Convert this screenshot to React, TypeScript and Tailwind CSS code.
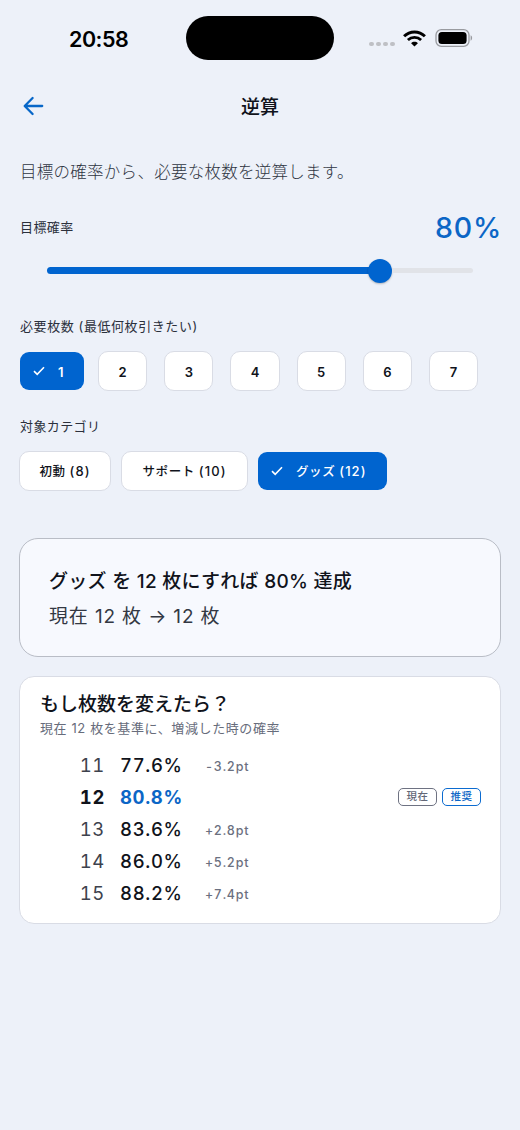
import React from "react";

const counts = [2, 3, 4, 5, 6, 7];

type Row = { count: number; rate: string; diff?: string; current?: boolean };

const rows: Row[] = [
  { count: 11, rate: "77.6%", diff: "-3.2pt" },
  { count: 12, rate: "80.8%", current: true },
  { count: 13, rate: "83.6%", diff: "+2.8pt" },
  { count: 14, rate: "86.0%", diff: "+5.2pt" },
  { count: 15, rate: "88.2%", diff: "+7.4pt" },
];

function StatusBar() {
  return (
    <div className="flex h-[76px] shrink-0 items-center">
      <div className="w-[186px] pl-[69px] pt-[3px] text-[21.5px] font-semibold leading-none tracking-[-0.5px] text-black">20:58</div>
      <div className="h-[44px] w-[148px] rounded-full bg-black" />
      <div className="ml-[35px] mt-[12px] flex gap-[2.2px]">
        {[0, 1, 2, 3].map((n) => (
          <span key={n} className="h-[4.5px] w-[4.8px] rounded-[2px] bg-[#bec0c5]" />
        ))}
      </div>
      <svg className="ml-[8px]" width="23" height="17" viewBox="0 0 23 17" fill="none">
        <path d="M1.1 6.2C6.9.5 16.1.5 21.9 6.2" stroke="#000" strokeWidth="3" />
        <path d="M4.9 9.9c3.7-3.5 9.5-3.5 13.2 0" stroke="#000" strokeWidth="2.8" />
        <path d="M8.1 13.2c1.9-1.8 4.9-1.8 6.8 0L11.5 16.6z" fill="#000" />
      </svg>
      <svg className="ml-[9px]" width="38" height="18" viewBox="0 0 38 18" fill="none">
        <rect x="1" y="0.7" width="33" height="16.6" rx="5.3" stroke="#999ba0" strokeWidth="1.3" />
        <rect x="3.4" y="3" width="28.2" height="12" rx="3.5" fill="#000" />
        <path d="M35.6 6.3c2 .7 2 4.7 0 5.4z" fill="#999ba0" />
      </svg>
    </div>
  );
}

function Check() {
  return (
    <svg className="shrink-0" width="12" height="10" viewBox="0 0 12 10" fill="none">
      <path d="M1 5.1l3.2 3.2L11 1.2" stroke="#fff" strokeWidth="1.6" />
    </svg>
  );
}

export default function App() {
  return (
    <div className="flex h-[1130px] w-[520px] flex-col overflow-hidden bg-[#edf1f9] font-['Inter','Noto_Sans_CJK_JP',sans-serif] text-[#10131b]">
      <StatusBar />
      <header className="grid h-[60px] shrink-0 grid-cols-[60px_1fr_60px] items-center">
        <svg className="ml-[23px]" width="21" height="20" viewBox="0 0 21 20" fill="none">
          <path d="M9.6 2L1.7 10l7.9 8M2 10h17.2" stroke="#0867c8" strokeWidth="2.3" strokeLinecap="round" strokeLinejoin="round" />
        </svg>
        <h1 className="pt-[3px] text-center text-[19px] font-medium leading-[28px]">逆算</h1>
      </header>

      <main className="flex flex-col px-[19px] pt-[24px]">
        <p className="pl-px text-[16.5px] font-light leading-[24px] tracking-[0.27px] text-[#2f3542]">
          目標の確率から、必要な枚数を逆算します。
        </p>

        <div className="mt-[24px] flex h-[40px] items-center justify-between">
          <span className="pl-px text-[13px] tracking-[0.4px] text-[#2b303c]">目標確率</span>
          <span className="mr-[-1px] text-[28.5px] font-medium tracking-[0.8px] text-[#0b66c6]">80%</span>
        </div>
        <div className="mx-[28px] mt-[10px] flex h-[25px] items-center">
          <div className="h-[7px] w-[322px] rounded-l-full bg-[#0064cf]" />
          <div className="-ml-px h-[24px] w-[24px] shrink-0 rounded-full bg-[#0064cf] shadow-[0_1px_2px_rgba(0,0,0,0.25)]" />
          <div className="h-[5px] flex-1 rounded-r-full bg-[#e1e3e8]" />
        </div>

        <h2 className="mt-[33px] pl-px text-[13px] leading-[20px] tracking-[0.58px] text-[#2b303c]">
          必要枚数 (最低何枚引きたい)
        </h2>
        <div className="mt-[15px] flex h-[40px] items-center text-[13px] font-semibold">
          <button className="ml-px mr-[14px] flex h-[38px] w-[64px] items-center gap-[13px] rounded-[9px] bg-[#0064cf] pl-[13px] text-white">
            <Check />
            <span className="pt-[3px]">1</span>
          </button>
          <div className="flex gap-[17px]">
            {counts.map((n) => (
              <button key={n} className="h-[40px] w-[49.2px] rounded-[10px] border border-[#d9dce5] bg-white pt-[3px]">
                {n}
              </button>
            ))}
          </div>
        </div>

        <h2 className="mt-[25px] pl-px text-[13px] leading-[20px] tracking-[0.4px] text-[#2b303c]">対象カテゴリ</h2>
        <div className="mt-[15px] flex h-[40px] items-center gap-[10px] text-[12.5px] font-medium tracking-[0.6px]">
          <button className="h-[40px] w-[92px] rounded-[10px] border border-[#d9dce5] bg-white pt-[2px]">
            初動 <span className="text-[13px] tracking-[1.1px]">(8)</span>
          </button>
          <button className="h-[40px] w-[127px] rounded-[10px] border border-[#d9dce5] bg-white pt-[2px]">
            サポート <span className="text-[13px] tracking-[1.1px]">(10)</span>
          </button>
          <button className="flex h-[38px] w-[129px] items-center gap-[13px] rounded-[9px] bg-[#0064cf] pl-[13px] text-white">
            <Check />
            <span className="whitespace-nowrap pt-[2px]">
              グッズ <span className="text-[13px] tracking-[1.1px]">(12)</span>
            </span>
          </button>
        </div>

        <section className="mt-[47px] h-[119px] rounded-[19px] border border-[#b9bdc6] bg-[#f7f9fe] pl-[29px] pt-[25px]">
          <p className="text-[19px] font-medium leading-[35px] tracking-[0.28px]">グッズ を 12 枚にすれば 80% 達成</p>
          <p className="text-[19px] leading-[35px] tracking-[0.85px] text-[#333843]">現在 12 枚 → 12 枚</p>
        </section>

        <section className="mt-[19px] h-[248px] rounded-[15px] border border-[#d9dce5] bg-white pl-[20px] pr-[19px] pt-[15px]">
          <h3 className="text-[19px] font-medium leading-[26px]">もし枚数を変えたら？</h3>
          <p className="text-[13px] leading-[20px] tracking-[0.6px] text-[#676c7b]">現在 12 枚を基準に、増減した時の確率</p>
          <div className="mt-[11px]">
            {rows.map((row) => (
              <div key={row.count} className="flex h-[32px] items-center text-[18.5px] tabular-nums tracking-[0.65px]">
                <span className={row.current ? "w-[65px] pt-[2px] text-right font-bold" : "w-[65px] pt-[2px] text-right text-[#3d424d]"}>{row.count}</span>
                <span className={row.current ? "ml-[15px] w-[85px] pt-[2px] font-bold text-[#0b66c6]" : "ml-[15px] w-[85px] pt-[2px] font-medium"}>
                  {row.rate}
                </span>
                {row.diff && <span className="mt-[4px] text-[12.5px] font-medium tracking-[0.75px] text-[#6b7080]">{row.diff}</span>}
                {row.current && (
                  <span className="ml-auto flex gap-[5px] text-[10.5px] font-medium leading-none tracking-[0.4px]">
                    <span className="flex h-[18px] w-[39px] items-center justify-center rounded-[5px] border border-[#6e7282] pt-px text-[#626777]">現在</span>
                    <span className="flex h-[18px] w-[39px] items-center justify-center rounded-[5px] border border-[#0b6bd0] pt-px text-[#0b66c6]">推奨</span>
                  </span>
                )}
              </div>
            ))}
          </div>
        </section>
      </main>
    </div>
  );
}
